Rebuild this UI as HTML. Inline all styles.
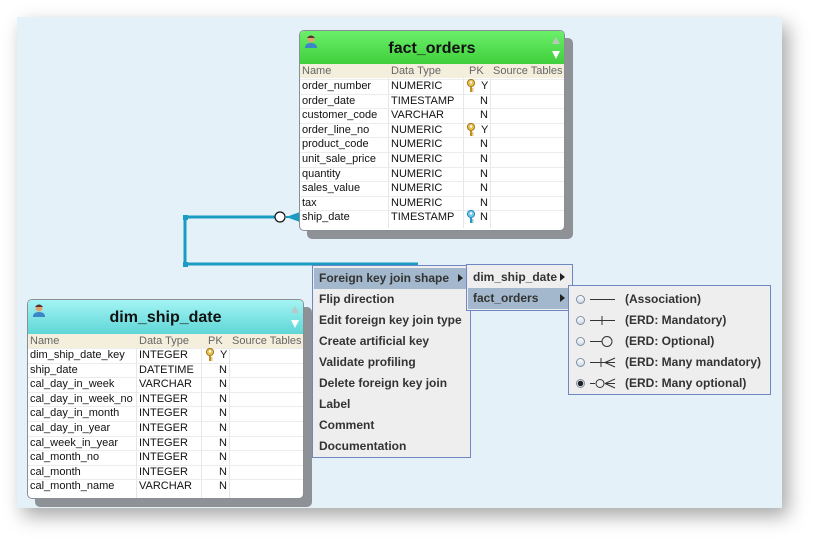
<!DOCTYPE html>
<html><head><meta charset="utf-8"><style>
*{margin:0;padding:0;box-sizing:border-box}
body{width:830px;height:556px;background:#fff;position:relative;overflow:hidden;font-family:"Liberation Sans",sans-serif}
.abs{position:absolute}
#canvas{left:17px;top:17px;width:765px;height:491px;background:#e4f1f8;box-shadow:6px 8px 18px rgba(0,0,0,.35)}
.tbl{position:absolute;border:1px solid #8a8f94;border-radius:5px;background:#fff;box-shadow:8px 8px 0 #8e9296;overflow:hidden}
.hdr{position:absolute;left:0;top:0;right:0;font-weight:bold;font-size:16px;color:#111;text-align:center}
.colh{position:absolute;left:0;right:0;height:14px;background:#f3efdc;font-size:11px;color:#666;line-height:14px}
.row{position:absolute;left:0;right:0;font-size:11px;color:#111;line-height:14px;border-bottom:1px solid #ececec}
.row span,.colh span{position:absolute;top:0;white-space:nowrap}
.row svg{position:absolute;top:0}
.vl{position:absolute;width:1px;background:#e6e6e6}
.menu{position:absolute;background:#eeeeee;border:1px solid #6f86c4;font-size:12px;font-weight:bold;color:#333}
.mi{position:absolute;left:1px;right:1px;height:21px;line-height:21px;padding-left:5px;white-space:nowrap}
.sel{background:#a3b8cc}
.arr{position:absolute;right:6px;top:6px;width:0;height:0;border-top:4px solid transparent;border-bottom:4px solid transparent;border-left:5px solid #222}
.rad{position:absolute;left:6px;top:6px;width:9px;height:9px;border-radius:50%;border:1px solid #7f8fa4;background:linear-gradient(#fff,#cdd8e6)}
</style></head><body>
<svg width="0" height="0" style="position:absolute">
<defs>
<symbol id="kg" viewBox="0 0 10 14"><circle cx="5" cy="4" r="3.6" fill="#e8c050" stroke="#a07818" stroke-width="1"/><circle cx="5" cy="3.5" r="1.2" fill="#fff"/><path d="M4 7.5H6V13H4Z M6 9.5H7.5V10.5H6Z M6 11.5H7.5V12.5H6Z" fill="#c09020"/></symbol>
<symbol id="kb" viewBox="0 0 10 14"><circle cx="5" cy="4" r="3.6" fill="#70c8ec" stroke="#2a88b8" stroke-width="1"/><circle cx="5" cy="3.5" r="1.2" fill="#fff"/><path d="M4 7.5H6V13H4Z M6 9.5H7.5V10.5H6Z M6 11.5H7.5V12.5H6Z" fill="#2a98c8"/></symbol>
</defs></svg>
<div id="canvas" class="abs"></div>

<svg class="abs" style="left:0;top:0" width="830" height="556">
<g stroke="#1a9bc2" stroke-width="3" fill="none">
<path d="M280 217 H185 V264 H418"/>
</g>
<rect x="183" y="215" width="5" height="5" fill="#1a9bc2"/>
<rect x="183" y="262" width="5" height="5" fill="#1a9bc2"/>
<rect x="300" y="366" width="10" height="5" fill="#1a9bc2"/>
<line x1="286" y1="217" x2="300" y2="217" stroke="#1a9bc2" stroke-width="2"/>
<path d="M286 217 L300 212 L300 222 Z" fill="#1a9bc2"/>
<circle cx="280" cy="217" r="5" fill="#fff" stroke="#111" stroke-width="1.2"/>
</svg>

<!-- fact_orders -->
<div class="tbl" style="left:299px;top:30px;width:266px;height:201px">
 <div class="hdr" style="height:33px;background:linear-gradient(#6cf06a,#3fcf3c);line-height:36px">fact_orders</div>
 <svg class="abs" style="left:4px;top:3px" width="14" height="15"><circle cx="7" cy="5" r="3.5" fill="#e0a070"/><path d="M3 4 Q7 -1 11 4" fill="#533" /><path d="M1 14 Q1 9 7 9 Q13 9 13 14 Z" fill="#3a86c8"/></svg>
 <svg class="abs" style="left:251px;top:4px" width="10" height="26"><path d="M1 9 L5 2 L9 9Z" fill="#b8c8b8"/><path d="M1 16 L9 16 L5 24Z" fill="#fff"/></svg>
 <div class="colh" style="top:33px"><span style="left:2px">Name</span><span style="left:91px">Data Type</span><span style="left:169px">PK</span><span style="left:193px">Source Tables</span></div>
 <div class="vl" style="left:88px;top:47px;height:150px"></div>
 <div class="vl" style="left:163px;top:47px;height:150px"></div>
 <div class="vl" style="left:190px;top:47px;height:150px"></div>
 <div class="row" style="top:48px"><span style="left:2px">order_number</span><span style="left:91px">NUMERIC</span><svg style="left:166px" width="10" height="14"><use href="#kg"/></svg><span style="left:181px">Y</span></div>
 <div class="row" style="top:62.6px"><span style="left:2px">order_date</span><span style="left:91px">TIMESTAMP</span><span style="left:180px">N</span></div>
 <div class="row" style="top:77.2px"><span style="left:2px">customer_code</span><span style="left:91px">VARCHAR</span><span style="left:180px">N</span></div>
 <div class="row" style="top:91.8px"><span style="left:2px">order_line_no</span><span style="left:91px">NUMERIC</span><svg style="left:166px" width="10" height="14"><use href="#kg"/></svg><span style="left:181px">Y</span></div>
 <div class="row" style="top:106.4px"><span style="left:2px">product_code</span><span style="left:91px">NUMERIC</span><span style="left:180px">N</span></div>
 <div class="row" style="top:121px"><span style="left:2px">unit_sale_price</span><span style="left:91px">NUMERIC</span><span style="left:180px">N</span></div>
 <div class="row" style="top:135.6px"><span style="left:2px">quantity</span><span style="left:91px">NUMERIC</span><span style="left:180px">N</span></div>
 <div class="row" style="top:150.2px"><span style="left:2px">sales_value</span><span style="left:91px">NUMERIC</span><span style="left:180px">N</span></div>
 <div class="row" style="top:164.8px"><span style="left:2px">tax</span><span style="left:91px">NUMERIC</span><span style="left:180px">N</span></div>
 <div class="row" style="top:179.4px"><span style="left:2px">ship_date</span><span style="left:91px">TIMESTAMP</span><svg style="left:166px" width="10" height="14"><use href="#kb"/></svg><span style="left:180px">N</span></div>
</div>

<!-- dim_ship_date -->
<div class="tbl" style="left:27px;top:299px;width:277px;height:200px">
 <div class="hdr" style="height:34px;background:linear-gradient(#a4f4f4,#5fd6d6);line-height:36px">dim_ship_date</div>
 <svg class="abs" style="left:4px;top:3px" width="14" height="15"><circle cx="7" cy="5" r="3.5" fill="#e0a070"/><path d="M3 4 Q7 -1 11 4" fill="#533" /><path d="M1 14 Q1 9 7 9 Q13 9 13 14 Z" fill="#3a86c8"/></svg>
 <svg class="abs" style="left:262px;top:4px" width="10" height="26"><path d="M1 9 L5 2 L9 9Z" fill="#b8c8c8"/><path d="M1 16 L9 16 L5 24Z" fill="#fff"/></svg>
 <div class="colh" style="top:34px"><span style="left:2px">Name</span><span style="left:111px">Data Type</span><span style="left:180px">PK</span><span style="left:204px">Source Tables</span></div>
 <div class="vl" style="left:108px;top:48px;height:150px"></div>
 <div class="vl" style="left:173px;top:48px;height:150px"></div>
 <div class="vl" style="left:201px;top:48px;height:150px"></div>
 <div class="row" style="top:48px"><span style="left:2px">dim_ship_date_key</span><span style="left:111px">INTEGER</span><svg style="left:177px" width="10" height="14"><use href="#kg"/></svg><span style="left:192px">Y</span></div>
 <div class="row" style="top:62.6px"><span style="left:2px">ship_date</span><span style="left:111px">DATETIME</span><span style="left:191px">N</span></div>
 <div class="row" style="top:77.2px"><span style="left:2px">cal_day_in_week</span><span style="left:111px">VARCHAR</span><span style="left:191px">N</span></div>
 <div class="row" style="top:91.8px"><span style="left:2px">cal_day_in_week_no</span><span style="left:111px">INTEGER</span><span style="left:191px">N</span></div>
 <div class="row" style="top:106.4px"><span style="left:2px">cal_day_in_month</span><span style="left:111px">INTEGER</span><span style="left:191px">N</span></div>
 <div class="row" style="top:121px"><span style="left:2px">cal_day_in_year</span><span style="left:111px">INTEGER</span><span style="left:191px">N</span></div>
 <div class="row" style="top:135.6px"><span style="left:2px">cal_week_in_year</span><span style="left:111px">INTEGER</span><span style="left:191px">N</span></div>
 <div class="row" style="top:150.2px"><span style="left:2px">cal_month_no</span><span style="left:111px">INTEGER</span><span style="left:191px">N</span></div>
 <div class="row" style="top:164.8px"><span style="left:2px">cal_month</span><span style="left:111px">INTEGER</span><span style="left:191px">N</span></div>
 <div class="row" style="top:179.4px"><span style="left:2px">cal_month_name</span><span style="left:111px">VARCHAR</span><span style="left:191px">N</span></div>
</div>

<!-- main menu -->
<div class="menu" style="left:312px;top:265px;width:159px;height:193px">
 <div class="mi sel" style="top:2px">Foreign key join shape<div class="arr"></div></div>
 <div class="mi" style="top:23px">Flip direction</div>
 <div class="mi" style="top:44px">Edit foreign key join type</div>
 <div class="mi" style="top:65px">Create artificial key</div>
 <div class="mi" style="top:86px">Validate profiling</div>
 <div class="mi" style="top:107px">Delete foreign key join</div>
 <div class="mi" style="top:128px">Label</div>
 <div class="mi" style="top:149px">Comment</div>
 <div class="mi" style="top:170px">Documentation</div>
</div>
<div class="menu" style="left:466px;top:264px;width:107px;height:47px">
 <div class="mi" style="top:2px">dim_ship_date<div class="arr"></div></div>
 <div class="mi sel" style="top:23px">fact_orders<div class="arr"></div></div>
</div>
<div class="menu" style="left:568px;top:285px;width:203px;height:110px">
 <div class="mi" style="top:3px;padding-left:55px"><div class="rad"></div>(Association)</div>
 <div class="mi" style="top:24px;padding-left:55px"><div class="rad"></div>(ERD: Mandatory)</div>
 <div class="mi" style="top:45px;padding-left:55px"><div class="rad"></div>(ERD: Optional)</div>
 <div class="mi" style="top:66px;padding-left:55px"><div class="rad"></div>(ERD: Many mandatory)</div>
 <div class="mi" style="top:87px;padding-left:55px"><div class="rad" style="background:radial-gradient(#222 0 2.5px,#f4f4f4 3px)"></div>(ERD: Many optional)</div>
 <svg class="abs" style="left:18px;top:0" width="30" height="110" stroke="#333" stroke-width="1" fill="none">
  <path d="M3 13.5H28"/>
  <path d="M3 34.5H28M15 30V39"/>
  <path d="M3 55.5H15"/><circle cx="20" cy="55.5" r="5"/>
  <path d="M3 76.5H28M14 72V81M18 76.5L28 72M18 76.5L28 81"/>
  <path d="M3 97.5H8M18 97.5H28"/><circle cx="13" cy="97.5" r="4"/><path d="M18 97.5L28 93M18 97.5L28 102"/>
 </svg>
</div>
</body></html>
